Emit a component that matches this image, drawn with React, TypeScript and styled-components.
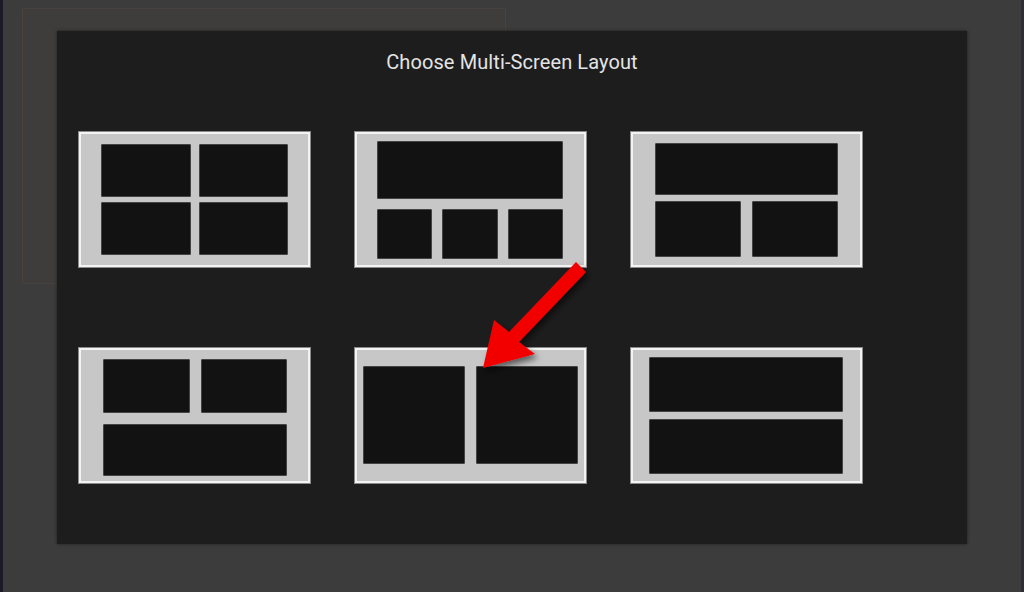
import React from 'react';
import styled, { createGlobalStyle } from 'styled-components';

const GlobalStyle = createGlobalStyle`
  html, body {
    margin: 0;
    padding: 0;
    background: #3c3c3c;
  }
  * {
    box-sizing: border-box;
  }
`;

interface TileProps {
  pad: string;
  cols: number;
  rows: string;
  colGap: number;
  rowGap: number;
}

interface PaneProps {
  span?: number;
}

const Screen = styled.div`
  position: relative;
  width: 1024px;
  height: 592px;
  overflow: hidden;
  background: #3c3c3c;
  box-shadow: inset 3px 0 0 #1b1b27, inset -3px 0 0 #2e2e35;
  font-family: Roboto, 'Liberation Sans', sans-serif;
`;

// faint video frame behind the dialog
const BackdropFrame = styled.div`
  margin: 8px 0 0 22px;
  width: 484px;
  height: 276px;
  border: 1px solid rgba(110, 80, 70, 0.22);
  background: #3e3d3c;
`;

const Dialog = styled.div`
  position: absolute;
  left: 57px;
  top: 31px;
  width: 910px;
  height: 513px;
  background: #1d1d1d;
  box-shadow: 0 0 3px rgba(0, 0, 0, 0.5);
  display: flex;
  flex-direction: column;
  align-items: stretch;
  padding-top: 20px;
`;

const Title = styled.div`
  text-align: center;
  color: #e4e4e4;
  font-size: 20px;
  line-height: 23px;
  letter-spacing: 0.1px;
`;

const LayoutGrid = styled.div`
  margin-top: 58px;
  padding-left: 22px;
  display: grid;
  grid-template-columns: repeat(3, 231px);
  grid-template-rows: repeat(2, 135px);
  column-gap: 45px;
  row-gap: 81px;
`;

const Tile = styled.div<TileProps>`
  display: grid;
  width: 231px;
  height: 135px;
  background: #c7c7c7;
  border: 2px solid #f3f3f3;
  box-shadow: 0 0 0 1px #8a8a8a;
  padding: ${({ pad }) => pad};
  grid-template-columns: repeat(${({ cols }) => cols}, 1fr);
  grid-template-rows: ${({ rows }) => rows};
  column-gap: ${({ colGap }) => colGap}px;
  row-gap: ${({ rowGap }) => rowGap}px;
`;

const Pane = styled.div<PaneProps>`
  background: #121212;
  border: 1px solid #444;
  border-radius: 1px;
  grid-column: span ${({ span }) => span ?? 1};
`;

const ArrowLayer = styled.svg`
  position: absolute;
  left: 0;
  top: 0;
  width: 1024px;
  height: 592px;
  pointer-events: none;
`;

export default function App() {
  return (
    <>
      <GlobalStyle />
      <Screen>
        <BackdropFrame />
        <Dialog>
          <Title>Choose Multi-Screen Layout</Title>
          <LayoutGrid>
            <Tile pad="10px 20px 10px 20px" cols={2} rows="1fr 1fr" colGap={8} rowGap={5}>
              <Pane />
              <Pane />
              <Pane />
              <Pane />
            </Tile>
            <Tile pad="7px 21px 6px 20px" cols={3} rows="58fr 50fr" colGap={10} rowGap={10}>
              <Pane span={3} />
              <Pane />
              <Pane />
              <Pane />
            </Tile>
            <Tile pad="9px 22px 8px 22px" cols={2} rows="52fr 56fr" colGap={11} rowGap={6}>
              <Pane span={2} />
              <Pane />
              <Pane />
            </Tile>
            <Tile pad="9px 21px 5px 22px" cols={2} rows="54fr 52fr" colGap={11} rowGap={11}>
              <Pane />
              <Pane />
              <Pane span={2} />
            </Tile>
            <Tile pad="16px 6px 17px 6px" cols={2} rows="1fr" colGap={11} rowGap={0}>
              <Pane />
              <Pane />
            </Tile>
            <Tile pad="7px 17px 7px 16px" cols={1} rows="1fr 1fr" colGap={0} rowGap={7}>
              <Pane />
              <Pane />
            </Tile>
          </LayoutGrid>
        </Dialog>
        <ArrowLayer viewBox="0 0 1024 592">
          <defs>
            <filter id="arrowShadow" x="-20%" y="-20%" width="140%" height="140%">
              <feDropShadow dx="3" dy="4" stdDeviation="3" floodColor="#000" floodOpacity="0.55" />
            </filter>
          </defs>
          <polygon
            points="576,262 586,272 519,342 535,354 483,368 494,320 509,332"
            fill="#f20000"
            filter="url(#arrowShadow)"
          />
        </ArrowLayer>
      </Screen>
    </>
  );
}
